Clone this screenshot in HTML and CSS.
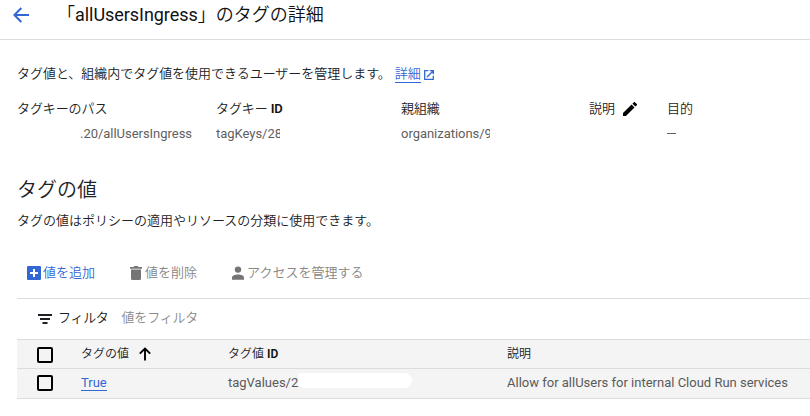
FILE: index.html
```html
<!DOCTYPE html>
<html lang="ja">
<head>
<meta charset="utf-8">
<title>タグの詳細</title>
<link rel="stylesheet" href="styles.css">
</head>
<body>
<header class="topbar">
  <svg class="back" viewBox="0 0 16 16"><path d="M16 8H1.600M8.300 1 1.400 8l6.900 7" fill="none" stroke="currentColor" stroke-width="2"/></svg>
  <h1>「<span class="name">allUsersIngress</span>」のタグの詳細</h1>
</header>
<main>
  <p class="intro">タグ値と、組織内でタグ値を使用できるユーザーを管理します。<a class="more" href="#">詳細</a><svg class="ext" viewBox="0 0 10 10"><path d="M4.300.7H.7v8.600h8.600V5.700M5.800.7h3.500v3.500M9.300.7 3 7" fill="none" stroke="currentColor" stroke-width="1.300"/></svg></p>
  <dl class="meta">
    <div><dt>タグキーのパス</dt><dd class="path">.20/allUsersIngress</dd></div>
    <div><dt>タグキー <b>ID</b></dt><dd><span class="redact">tagKeys/28</span></dd></div>
    <div><dt>親組織</dt><dd><span class="redact">organizations/9</span></dd></div>
    <div><dt>説明<svg class="pencil" viewBox="3 3 18 18"><path fill="currentColor" d="M3 17.250V21h3.750L17.810 9.940l-3.750-3.750L3 17.250zM20.710 7.040a1 1 0 0 0 0-1.410l-2.340-2.340a1 1 0 0 0-1.410 0l-1.830 1.830 3.750 3.750 1.830-1.830z"/></svg></dt></div>
    <div><dt>目的</dt><dd><span class="dash"></span></dd></div>
  </dl>
  <h2>タグの値</h2>
  <p class="desc">タグの値はポリシーの適用やリソースの分類に使用できます。</p>
  <nav class="tools">
    <a class="tool add"><svg viewBox="0 0 14 14"><path fill="currentColor" fill-rule="evenodd" d="M1 0h12a1 1 0 0 1 1 1v12a1 1 0 0 1-1 1H1a1 1 0 0 1-1-1V1a1 1 0 0 1 1-1zM6 3v3H3v2h3v3h2V8h3V6H8V3z"/></svg>値を追加</a>
    <a class="tool del"><svg viewBox="0 0 14 14"><path fill="currentColor" d="M1 1h3.500l1-1h3l1 1H13v1.700H1zM2 3.600h10v8.900a1.500 1.500 0 0 1-1.500 1.500h-7A1.500 1.500 0 0 1 2 12.500z"/></svg>値を削除</a>
    <a class="tool access"><svg viewBox="0 0 14 14"><circle cx="7" cy="3.600" r="3.200" fill="currentColor"/><path fill="currentColor" d="M1 13.800v-2C1 9.700 4 8.600 7 8.600s6 1.100 6 3.200v2z"/></svg>アクセスを管理する</a>
  </nav>
  <section class="panel">
    <div class="filter">
      <svg viewBox="0 0 14 10"><path fill="currentColor" d="M0 0h14v2H0zM2 4h10v2H2zM4.500 8h5v2h-5z"/></svg>
      <span class="label">フィルタ</span><span class="hint">値をフィルタ</span>
    </div>
    <div class="row head">
      <i class="box"></i>
      <span class="value">タグの値<svg class="sort" viewBox="0 0 12 14"><path d="M6 13.500V1.500M.8 6.700 6 1.500l5.200 5.200" fill="none" stroke="currentColor" stroke-width="1.900"/></svg></span>
      <span class="id">タグ値 <b>ID</b></span>
      <span>説明</span>
    </div>
    <div class="row data">
      <i class="box"></i>
      <span class="value"><a href="#">True</a></span>
      <span class="id">tagValues/2<i class="mask"></i></span>
      <span>Allow for allUsers for internal Cloud Run services</span>
    </div>
  </section>
</main>
</body>
</html>
```
FILE: styles.css
```css
* { box-sizing: border-box; margin: 0; }
body {
  width: 810px; height: 416px; overflow: hidden; background: #fff; color: #202124;
  font: 13px/20px Roboto, "Noto Sans CJK JP DemiLight", "Noto Sans CJK JP Light", "Noto Sans CJK JP", sans-serif;
}
svg { display: block; flex: none; }
a { color: #3367d6; text-decoration: none; }
.topbar { height: 40px; border-bottom: 1px solid #dcdcdc; display: flex; align-items: flex-start; padding-left: 13px; }
.back { width: 16px; height: 16px; margin: 7px 28px 0 0; color: #3367d6; }
h1 { font-size: 18px; font-weight: 400; line-height: 30px; white-space: nowrap; color: #111; }
.name { letter-spacing: -.05px; }
main { padding-left: 17px; }
.intro { display: flex; align-items: center; height: 20px; margin-top: 24px; letter-spacing: -.03px; }
.more { line-height: 17px; margin-left: 4px; border-bottom: 1px solid #3367d6; }
.ext { width: 10px; height: 10px; margin: 1px 0 0 3px; color: #3367d6; }
.meta { display: grid; grid-template-columns: 199px 185px 188px 78px 1fr; margin-top: 15px; height: 50px; }
.meta dt { display: flex; align-items: center; height: 20px; white-space: pre; letter-spacing: -.1px; }
.meta dd { height: 20px; margin-top: 5px; color: #5f6060; display: flex; letter-spacing: -.03px; }
.path { padding-left: 63px; }
.redact { position: relative; }
.redact::after { content: ""; position: absolute; top: 2px; right: -1px; width: 3px; height: 16px; background: #fff; }
b { font-weight: 600; color: #111; }
.pencil { width: 14px; height: 14px; margin-left: 8px; color: #000; }
.dash { width: 9px; height: 1px; margin-top: 9px; background: #5f6060; }
h2 { font-size: 20px; font-weight: 400; line-height: 28px; margin-top: 27px; }
.desc { margin-top: 7px; }
.tools { display: flex; height: 20px; margin-top: 32px; padding-left: 10px; }
.tool { display: flex; align-items: center; color: #858585; }
.tool svg { width: 14px; height: 14px; margin-right: 2px; color: #757575; }
.tool.add, .tool.add svg { color: #3367d6; }
.del { margin-left: 34px; }
.access { margin-left: 34px; }
.panel { margin-top: 15px; border-top: 1px solid #dcdcdc; }
.filter { display: flex; align-items: center; height: 40px; padding: 0 0 2px 21px; line-height: 20px; letter-spacing: -.3px; }
.filter svg { width: 14px; height: 10px; margin: 2px 6px 0 0; }
.hint { color: #8a8a8a; margin-left: 13px; letter-spacing: -.2px; }
.row { display: grid; grid-template-columns: 64px 147px 279px 1fr; border-top: 1px solid #dcdcdc; background: #f4f4f4; }
.row > span { display: flex; white-space: pre; }
.head { height: 29px; font-size: 12px; line-height: 28px; }
.head b { font-size: 12px; }
.data { height: 31px; border-bottom: 1px solid #dcdcdc; color: #5a5a5a; line-height: 28px; }
.box { width: 16px; height: 16px; border: 2px solid #000; border-radius: 2px; margin: 7px 0 0 20px; }
.data .box { margin-top: 6px; }
.sort { width: 12px; height: 14px; margin: 7px 0 0 10px; color: #000; }
.data a { height: 22px; border-bottom: 1px solid #3367d6; }
.mask { width: 114px; height: 15px; margin-top: 4px; border-radius: 4px 8px 8px 6px; background: #fff; }
```
